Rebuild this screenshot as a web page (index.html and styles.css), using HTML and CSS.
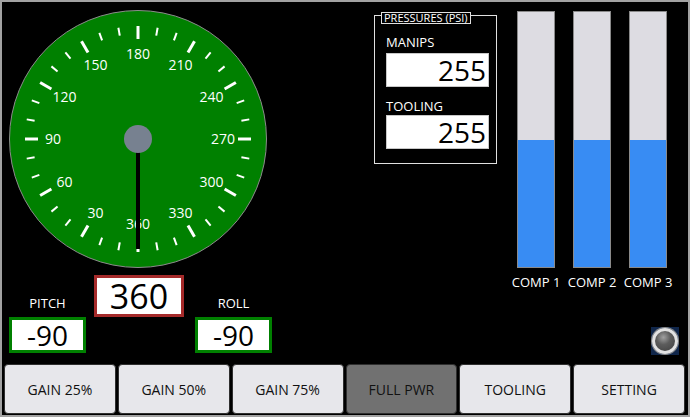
FILE: index.html
```html
<!DOCTYPE html>
<html lang="en">
<head>
  <meta charset="UTF-8">
  <meta name="viewport" content="width=device-width, initial-scale=1.0">
  <title>ROV Console</title>
  <link rel="stylesheet" href="styles.css">
</head>
<body>
  <div class="screen">
    <div class="top">
      <div class="nav">
        <svg class="gauge" viewBox="0 0 260 260" width="260" height="260">
          <circle cx="130" cy="130" r="128.5" fill="#008000" stroke="#8c8c8c" stroke-width="1"/>
          <g id="ticks" stroke="#fff"></g>
          <g id="labels" fill="#fff" font-size="14" text-anchor="middle"></g>
          <rect x="128" y="130" width="4" height="110" fill="#000"/>
          <circle cx="130" cy="130" r="14" fill="#778190"/>
        </svg>
        <div class="attitude">
          <div class="axis">
            <div class="axis-label">PITCH</div>
            <div class="readout readout-green">-90</div>
          </div>
          <div class="readout readout-heading">360</div>
          <div class="axis">
            <div class="axis-label">ROLL</div>
            <div class="readout readout-green">-90</div>
          </div>
        </div>
      </div>

      <div class="pressures">
        <div class="group-title">PRESSURES (PSI)</div>
        <div class="field-label">MANIPS</div>
        <div class="field-value">255</div>
        <div class="field-label field-label-second">TOOLING</div>
        <div class="field-value field-value-second">255</div>
      </div>

      <div class="right">
        <div class="bars">
          <div class="comp">
            <div class="bar"><div class="bar-fill" style="height: 50%"></div></div>
            <div class="comp-label">COMP 1</div>
          </div>
          <div class="comp">
            <div class="bar"><div class="bar-fill" style="height: 50%"></div></div>
            <div class="comp-label">COMP 2</div>
          </div>
          <div class="comp">
            <div class="bar"><div class="bar-fill" style="height: 50%"></div></div>
            <div class="comp-label">COMP 3</div>
          </div>
        </div>
        <div class="lamp"><div class="lamp-glass"></div></div>
      </div>
    </div>

    <div class="buttons">
      <button>GAIN 25%</button>
      <button>GAIN 50%</button>
      <button>GAIN 75%</button>
      <button class="active">FULL PWR</button>
      <button>TOOLING</button>
      <button>SETTING</button>
    </div>
  </div>

  <script>
    // compass dial: 0/360 at the bottom, 180 at the top, ticks every 10 degrees
    const svgNS = 'http://www.w3.org/2000/svg';
    const ticks = document.getElementById('ticks');
    const labels = document.getElementById('labels');
    const cx = 130;
    const cy = 130;

    function point(deg, r) {
      const rad = deg * Math.PI / 180;
      return [cx - Math.sin(rad) * r, cy + Math.cos(rad) * r];
    }

    for (let a = 0; a < 360; a += 10) {
      const major = a % 30 === 0;
      const [x1, y1] = point(a, major ? 100 : 105);
      const [x2, y2] = point(a, 113);
      const line = document.createElementNS(svgNS, 'line');
      line.setAttribute('x1', x1);
      line.setAttribute('y1', y1);
      line.setAttribute('x2', x2);
      line.setAttribute('y2', y2);
      line.setAttribute('stroke-width', major ? 3 : 2);
      ticks.appendChild(line);
    }

    for (let a = 30; a <= 360; a += 30) {
      const [x, y] = point(a, 85);
      const text = document.createElementNS(svgNS, 'text');
      text.setAttribute('x', x);
      text.setAttribute('y', y + 5);
      text.textContent = a;
      labels.appendChild(text);
    }
  </script>
</body>
</html>
```

FILE: styles.css
```css
body {
  margin: 0;
  background: #000;
  font-family: "Open Sans", "Liberation Sans", sans-serif;
}
.screen {
  width: 690px;
  height: 417px;
  box-sizing: border-box;
  border: 2px solid #a2a2a2;
  background: #000;
  color: #fff;
  display: flex;
  flex-direction: column;
}
.top {
  display: flex;
  height: 360px;
}
.nav {
  width: 290px;
  box-sizing: border-box;
  padding: 7px 0 0 6px;
}
.gauge {
  display: block;
}
.attitude {
  display: flex;
  align-items: flex-start;
  margin: 6px 0 0 1px;
}
.axis {
  width: 77px;
  padding-top: 20px;
  display: flex;
  flex-direction: column;
  align-items: center;
}
.axis-label {
  font-size: 13px;
  line-height: 16px;
  margin-bottom: 6px;
}
.readout {
  box-sizing: border-box;
  background: #fff;
  color: #000;
  display: flex;
  align-items: center;
  justify-content: center;
  line-height: 1;
}
.readout-green {
  width: 77px;
  height: 36px;
  border: 3px solid #008000;
  font-size: 28px;
}
.readout-heading {
  width: 90px;
  height: 42px;
  margin: 0 11px 0 8px;
  border: 3px solid #a52a2a;
  font-size: 34px;
}
.pressures {
  position: relative;
  width: 123px;
  height: 149px;
  box-sizing: border-box;
  margin: 13px 0 0 82px;
  padding: 18px 0 0 11px;
  border: 1px solid #e0e0e0;
}
.group-title {
  position: absolute;
  top: -4px;
  left: 6px;
  padding: 0 2px;
  border: 1px solid #e0e0e0;
  background: #000;
  font-size: 11px;
  line-height: 10px;
  height: 10px;
  white-space: nowrap;
}
.field-label {
  font-size: 13px;
  line-height: 16px;
}
.field-label-second {
  margin-top: 11px;
}
.field-value {
  width: 103px;
  height: 34px;
  box-sizing: border-box;
  margin-top: 3px;
  padding-right: 2px;
  border: 1px solid #c8c8c8;
  background: #fff;
  color: #000;
  font-size: 28px;
  line-height: 32px;
  text-align: right;
}
.field-value-second {
  margin-top: 1px;
}
.right {
  flex: 1;
  display: flex;
  flex-direction: column;
  align-items: flex-end;
  margin-left: 20px;
}
.bars {
  align-self: flex-start;
  display: flex;
  gap: 18px;
  margin-top: 9px;
}
.comp {
  width: 38px;
  display: flex;
  flex-direction: column;
  align-items: center;
}
.bar {
  width: 38px;
  height: 257px;
  box-sizing: border-box;
  border: 1px solid #8a8a8a;
  background: #dddce2;
  display: flex;
  flex-direction: column;
  justify-content: flex-end;
}
.bar-fill {
  background: #388cf3;
}
.comp-label {
  margin-top: 6px;
  font-size: 13px;
  line-height: 16px;
  white-space: nowrap;
}
.lamp {
  width: 28px;
  height: 28px;
  margin: 37px 9px 0 0;
  background: #10264a;
  display: flex;
  align-items: center;
  justify-content: center;
}
.lamp-glass {
  width: 26px;
  height: 26px;
  box-sizing: border-box;
  border-radius: 50%;
  border: 3px solid #e2e2e2;
  background: radial-gradient(circle at 42% 32%, #a0a0a0 0, #5c5c5c 40%, #3e3e3e 100%);
  box-shadow: 0 0 0 1px #8a8a8a;
}
.buttons {
  display: grid;
  grid-template-columns: repeat(6, 1fr);
  gap: 2px;
  height: 50px;
  margin: 2px 3px 0 2px;
}
button {
  font-family: inherit;
  font-size: 14px;
  color: #111;
  background: #e7e7eb;
  border: 1px solid #2f2f2f;
  border-radius: 4px;
  padding: 0;
}
button.active {
  background: #717171;
}
```
